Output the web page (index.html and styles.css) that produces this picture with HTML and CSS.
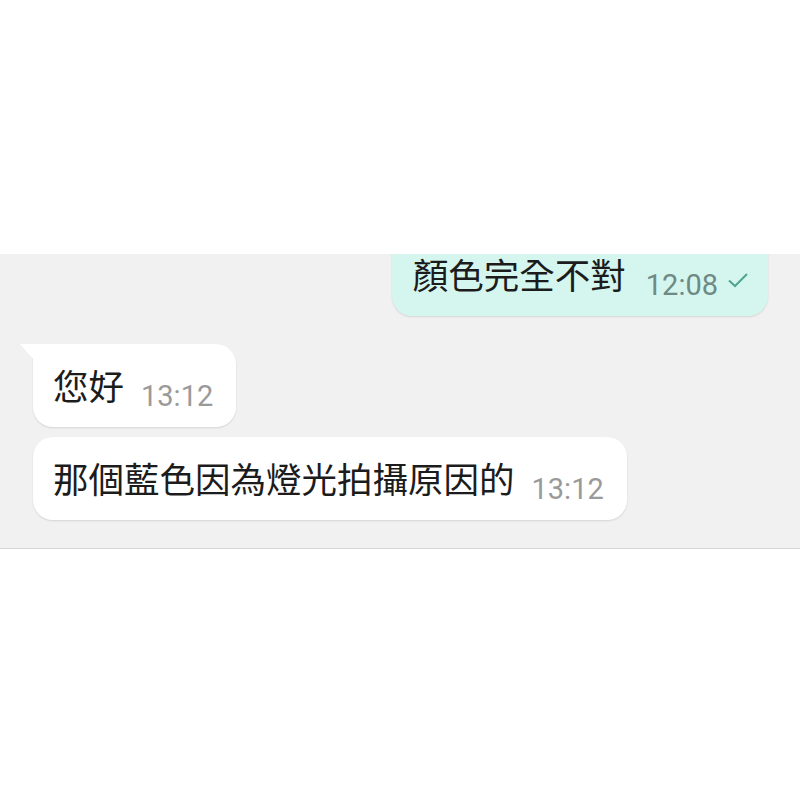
FILE: index.html
```html
<!DOCTYPE html>
<html lang="zh-TW">
<head>
  <meta charset="UTF-8">
  <meta name="viewport" content="width=device-width, initial-scale=1.0">
  <title>聊天</title>
  <link rel="stylesheet" href="styles.css">
</head>
<body>
  <div class="chat">
    <div class="row out">
      <div class="bubble sent">
        <span class="text">顏色完全不對</span>
        <span class="time">12:08</span>
        <svg class="tick" viewBox="0 0 22 16" width="22" height="16">
          <path d="M2 8.5 L8 14 L20 2" fill="none" stroke="#4fa493" stroke-width="2"/>
        </svg>
      </div>
    </div>

    <div class="row in">
      <div class="bubble recv first">
        <span class="text">您好</span>
        <span class="time">13:12</span>
      </div>
    </div>

    <div class="row in">
      <div class="bubble recv">
        <span class="text">那個藍色因為燈光拍攝原因的</span>
        <span class="time">13:12</span>
      </div>
    </div>
  </div>
</body>
</html>
```

FILE: styles.css
```css
body {
  margin: 0;
  padding: 0;
  background-color: #fff;
  font-family: "Noto Sans CJK TC", "Noto Sans", sans-serif;
  color: #1c1c1c;
}
.chat {
  margin-top: 254px;
  height: 294px;
  background-color: #f1f1f1;
  border-bottom: 1px solid #d6d6d6;
  overflow: hidden;
  padding: 0 32px 0 33px;
  display: flex;
  flex-direction: column;
  gap: 10px;
}
.row {
  display: flex;
}
.row.out {
  justify-content: flex-end;
  margin-top: -21px;
  margin-bottom: 18px;
}
.bubble {
  position: relative;
  display: flex;
  align-items: flex-end;
  padding: 22px 23px 23px 20px;
  border-radius: 20px;
  box-shadow: 0 1px 2px rgba(0, 0, 0, 0.12);
}
.recv {
  background-color: #fff;
}
.sent {
  background-color: #d5f6ef;
  padding-left: 21px;
  padding-right: 19px;
}
.first {
  border-top-left-radius: 0;
}
.first::before {
  content: "";
  position: absolute;
  top: 0;
  left: -13px;
  width: 14px;
  height: 16px;
  background-color: #fff;
  clip-path: polygon(0 0, 100% 0, 100% 100%);
}
.text {
  font-size: 35.5px;
  line-height: 38px;
  white-space: nowrap;
}
.time {
  font-family: Roboto, "Liberation Sans", sans-serif;
  font-size: 29px;
  line-height: 16px;
  color: #9a9a9a;
  margin-left: 17px;
}
.sent .time {
  color: #6f8a84;
  margin-left: 20px;
}
.tick {
  margin-left: 9px;
  margin-bottom: 5px;
}
```
